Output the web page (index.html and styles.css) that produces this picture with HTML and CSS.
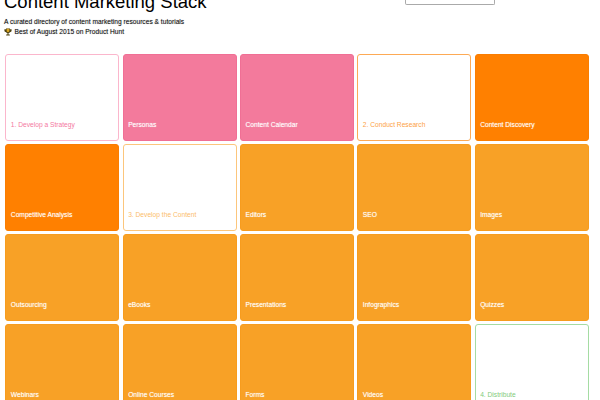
FILE: index.html
```html
<!DOCTYPE html>
<html lang="en">
<head>
<meta charset="utf-8">
<title>Content Marketing Stack</title>
<link rel="stylesheet" href="styles.css">
</head>
<body>
<header class="header">
  <div class="intro">
    <h1 class="title">Content Marketing Stack</h1>
    <p class="tagline">A curated directory of content marketing resources &amp; tutorials</p>
    <p class="tagline award"><svg class="trophy" viewBox="0 0 10 10" width="8" height="8"><path d="M2.5 0.5h5v1h2v1.5c0 1.2-1 2-2.2 2.200-.4.7-1 1.100-1.600 1.200v1.600h1.600v1.500h-4.600v-1.500h1.600v-1.600c-.6-.1-1.200-.5-1.600-1.200-1.200-.2-2.200-1-2.200-2.200v-1.500h2z" fill="#4f4310"/><path d="M3.300 1h3.400v2.500c0 1-.8 1.800-1.700 1.800s-1.700-.8-1.700-1.800z" fill="#d9a520"/></svg>Best of August 2015 on Product Hunt</p>
  </div>
  <div class="search"></div>
</header>
<main class="grid">
  <a class="card step pink">1. Develop a Strategy</a>
  <a class="card fill-pink">Personas</a>
  <a class="card fill-pink">Content Calendar</a>
  <a class="card step orange">2. Conduct Research</a>
  <a class="card fill-deep">Content Discovery</a>
  <a class="card fill-deep">Competitive Analysis</a>
  <a class="card step amber">3. Develop the Content</a>
  <a class="card fill-amber">Editors</a>
  <a class="card fill-amber">SEO</a>
  <a class="card fill-amber">Images</a>
  <a class="card fill-amber">Outsourcing</a>
  <a class="card fill-amber">eBooks</a>
  <a class="card fill-amber">Presentations</a>
  <a class="card fill-amber">Infographics</a>
  <a class="card fill-amber">Quizzes</a>
  <a class="card fill-amber">Webinars</a>
  <a class="card fill-amber">Online Courses</a>
  <a class="card fill-amber">Forms</a>
  <a class="card fill-amber">Videos</a>
  <a class="card step green">4. Distribute</a>
</main>
</body>
</html>
```
FILE: styles.css
```css
html, body {
  margin: 0;
  height: 400px;
  overflow: hidden;
  background: #fff;
}
body {
  font-family: "Liberation Sans", Arial, sans-serif;
  color: #111;
}
.header {
  display: flex;
  justify-content: space-between;
  align-items: flex-start;
  height: 54px;
  padding: 0 105px 0 4px;
  overflow: hidden;
}
.title {
  margin: -9.500px 0 0;
  font-size: 18.500px;
  line-height: 22px;
  font-weight: 400;
  color: #000;
}
.tagline {
  margin: 0;
  font-size: 6.670px;
  line-height: 10px;
  text-shadow: 0 0 1px rgba(0, 0, 0, 0.35);
}
.intro .title + .tagline {
  margin-top: 4px;
}
.award {
  display: flex;
  align-items: center;
  gap: 2.500px;
}
.trophy {
  flex: none;
}
.search {
  width: 88px;
  height: 4px;
  background: #fff;
  border: 1px solid #aaa;
  border-top: 0;
  border-radius: 0 0 2px 2px;
}
.grid {
  display: grid;
  grid-template-columns: repeat(5, 114px);
  grid-auto-rows: 86.670px;
  gap: 3.330px;
  padding-left: 5.330px;
}
.card {
  display: flex;
  align-items: flex-end;
  box-sizing: border-box;
  padding: 0 4.500px 9.500px;
  border: 1px solid transparent;
  border-radius: 3px;
  font-size: 6.670px;
  line-height: 10px;
  color: #fff;
  text-shadow: 0 0 1px rgba(255, 255, 255, 0.6);
}
.step {
  background: #fff;
  text-shadow: none;
}
.pink { border-color: #fbb6cc; color: #f47a9f; }
.orange { border-color: #fdaa55; color: #fd9f45; }
.amber { border-color: #fcc67c; color: #fbbd6c; }
.green { border-color: #a5dca3; color: #7fcb7c; }
.fill-pink { background: #f37a9c; border-color: #f06f95; }
.fill-deep { background: #ff8000; border-color: #fa7d00; }
.fill-amber { background: #f8a126; border-color: #f79c1e; }
```
